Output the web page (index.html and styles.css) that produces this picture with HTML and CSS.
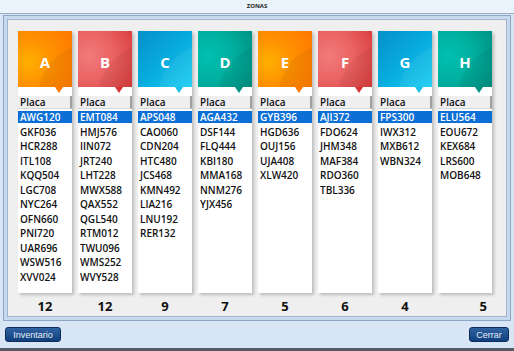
FILE: index.html
```html
<!DOCTYPE html>
<html lang="es">

<head>
    <meta charset="UTF-8">
    <title>Zonas</title>
    <link rel="stylesheet" href="styles.css">
</head>

<body>
    <div class="titlebar">ZONAS</div>

    <div class="frame">
        <div class="panel">
            <div class="zones">
                <div class="zone">
                    <div class="card">
                        <div class="head orange">A</div>
                        <div class="strip"><span class="tip tip-orange"></span></div>
                        <div class="colhead">Placa</div>
                        <ul class="plates">
                            <li class="sel">AWG120</li>
                            <li>GKF036</li>
                            <li>HCR288</li>
                            <li>ITL108</li>
                            <li>KQQ504</li>
                            <li>LGC708</li>
                            <li>NYC264</li>
                            <li>OFN660</li>
                            <li>PNI720</li>
                            <li>UAR696</li>
                            <li>WSW516</li>
                            <li>XVV024</li>
                        </ul>
                    </div>
                    <div class="count">12</div>
                </div>

                <div class="zone">
                    <div class="card">
                        <div class="head red">B</div>
                        <div class="strip"><span class="tip tip-red"></span></div>
                        <div class="colhead">Placa</div>
                        <ul class="plates">
                            <li class="sel">EMT084</li>
                            <li>HMJ576</li>
                            <li>IIN072</li>
                            <li>JRT240</li>
                            <li>LHT228</li>
                            <li>MWX588</li>
                            <li>QAX552</li>
                            <li>QGL540</li>
                            <li>RTM012</li>
                            <li>TWU096</li>
                            <li>WMS252</li>
                            <li>WVY528</li>
                        </ul>
                    </div>
                    <div class="count">12</div>
                </div>

                <div class="zone">
                    <div class="card">
                        <div class="head blue">C</div>
                        <div class="strip"><span class="tip tip-blue"></span></div>
                        <div class="colhead">Placa</div>
                        <ul class="plates">
                            <li class="sel">APS048</li>
                            <li>CAO060</li>
                            <li>CDN204</li>
                            <li>HTC480</li>
                            <li>JCS468</li>
                            <li>KMN492</li>
                            <li>LIA216</li>
                            <li>LNU192</li>
                            <li>RER132</li>
                        </ul>
                    </div>
                    <div class="count">9</div>
                </div>

                <div class="zone">
                    <div class="card">
                        <div class="head teal">D</div>
                        <div class="strip"><span class="tip tip-teal"></span></div>
                        <div class="colhead">Placa</div>
                        <ul class="plates">
                            <li class="sel">AGA432</li>
                            <li>DSF144</li>
                            <li>FLQ444</li>
                            <li>KBI180</li>
                            <li>MMA168</li>
                            <li>NNM276</li>
                            <li>YJX456</li>
                        </ul>
                    </div>
                    <div class="count">7</div>
                </div>

                <div class="zone">
                    <div class="card">
                        <div class="head orange">E</div>
                        <div class="strip"><span class="tip tip-orange"></span></div>
                        <div class="colhead">Placa</div>
                        <ul class="plates">
                            <li class="sel">GYB396</li>
                            <li>HGD636</li>
                            <li>OUJ156</li>
                            <li>UJA408</li>
                            <li>XLW420</li>
                        </ul>
                    </div>
                    <div class="count">5</div>
                </div>

                <div class="zone">
                    <div class="card">
                        <div class="head red">F</div>
                        <div class="strip"><span class="tip tip-red"></span></div>
                        <div class="colhead">Placa</div>
                        <ul class="plates">
                            <li class="sel">AJI372</li>
                            <li>FDO624</li>
                            <li>JHM348</li>
                            <li>MAF384</li>
                            <li>RDO360</li>
                            <li>TBL336</li>
                        </ul>
                    </div>
                    <div class="count">6</div>
                </div>

                <div class="zone">
                    <div class="card">
                        <div class="head blue">G</div>
                        <div class="strip"><span class="tip tip-blue"></span></div>
                        <div class="colhead">Placa</div>
                        <ul class="plates">
                            <li class="sel">FPS300</li>
                            <li>IWX312</li>
                            <li>MXB612</li>
                            <li>WBN324</li>
                        </ul>
                    </div>
                    <div class="count">4</div>
                </div>

                <div class="zone">
                    <div class="card">
                        <div class="head teal">H</div>
                        <div class="strip"><span class="tip tip-teal"></span></div>
                        <div class="colhead">Placa</div>
                        <ul class="plates">
                            <li class="sel">ELU564</li>
                            <li>EOU672</li>
                            <li>KEX684</li>
                            <li>LRS600</li>
                            <li>MOB648</li>
                        </ul>
                    </div>
                    <div class="count last">5</div>
                </div>
            </div>
        </div>
    </div>

    <div class="footer">
        <button class="btn btn-wide">Inventario</button>
        <button class="btn">Cerrar</button>
    </div>
    <div class="bottombar"></div>
</body>

</html>
```

FILE: styles.css
```css
body {
    margin: 0;
    width: 514px;
    height: 351px;
    overflow: hidden;
    background-color: #d7e5f4;
    font-family: 'Open Sans', 'Liberation Sans', sans-serif;
}

.titlebar {
    height: 13px;
    line-height: 13px;
    text-align: center;
    font-size: 6px;
    font-weight: bold;
    color: #222;
    background-color: #eaf2fb;
    border-bottom: 1px solid #9cadc2;
}

.frame {
    margin: 1px 3px 0 3px;
    padding: 3px;
    background-color: #c9d9ed;
    border: 1px solid #8ea7c7;
}

.panel {
    padding: 11px 0 2px 10px;
    background-color: #efefef;
    border: 1px solid #9fb5d3;
}

.zones {
    display: flex;
    gap: 6px;
}

.zone {
    width: 54px;
}

.card {
    height: 262px;
    background-color: white;
    box-shadow: 2px 2px 3px rgba(0, 0, 0, 0.22);
}

.head {
    position: relative;
    overflow: hidden;
    height: 56px;
    line-height: 62px;
    text-align: center;
    color: white;
    font-size: 15px;
    font-weight: bold;
}

.head::after {
    content: '';
    position: absolute;
    left: 20px;
    top: 12px;
    width: 110px;
    height: 110px;
    border-radius: 50%;
    background-color: rgba(0, 0, 0, 0.05);
}

.orange {
    background: radial-gradient(circle at 20% 55%, #ffb000 0, #ff9000 45%, #ff7800 100%);
}

.red {
    background: radial-gradient(circle at 20% 45%, #f27a7a 0, #ea6464 45%, #da3c3c 100%);
}

.blue {
    background: linear-gradient(135deg, #0590c8 0, #08aedf 55%, #1ccdf3 100%);
}

.blue::after {
    background-color: rgba(255, 255, 255, 0.06);
}

.teal {
    background: radial-gradient(circle at 20% 45%, #00c0b0 0, #00b0a0 45%, #008f80 100%);
}

.strip {
    height: 9px;
    padding-left: 37px;
}

.tip {
    display: block;
    width: 0;
    height: 0;
    border-left: 4px solid transparent;
    border-right: 4px solid transparent;
    border-top: 6px solid #ff7800;
}

.tip-red {
    border-top-color: #d83232;
}

.tip-blue {
    border-top-color: #18c0ec;
}

.tip-teal {
    border-top-color: #00907f;
}

.colhead {
    height: 12px;
    line-height: 13px;
    padding-left: 2px;
    font-size: 10px;
    font-weight: 600;
    color: #111;
    background-color: #efefef;
    border-right: 2px solid #a0a0a0;
    border-bottom: 1px solid #d8d8d8;
}

.plates {
    list-style: none;
    margin: 0;
    padding: 2px 0 0 0;
}

.plates li {
    height: 12px;
    line-height: 12px;
    margin-bottom: 2.5px;
    padding-left: 2px;
    font-size: 10px;
    font-weight: 600;
    color: #111;
}

.plates li.sel {
    background-color: #0c6fd5;
    color: white;
}

.count {
    margin-top: 5px;
    height: 16px;
    line-height: 16px;
    text-align: center;
    font-size: 13px;
    font-weight: bold;
    color: #111;
}

.count.last {
    text-align: right;
    padding-right: 5px;
}

.footer {
    height: 27px;
    display: flex;
    justify-content: space-between;
    align-items: flex-start;
    padding: 6px 5px 0 5px;
    box-sizing: border-box;
}

.btn {
    height: 15px;
    width: 40px;
    padding: 0;
    font-family: 'Liberation Sans', sans-serif;
    font-size: 9px;
    color: #e8eef8;
    background: linear-gradient(#2f62a2, #103f7c);
    border: 1px solid #0b2c5c;
    border-radius: 3px;
}

.btn-wide {
    width: 56px;
}

.bottombar {
    height: 3px;
    background-color: #555b62;
}
```
